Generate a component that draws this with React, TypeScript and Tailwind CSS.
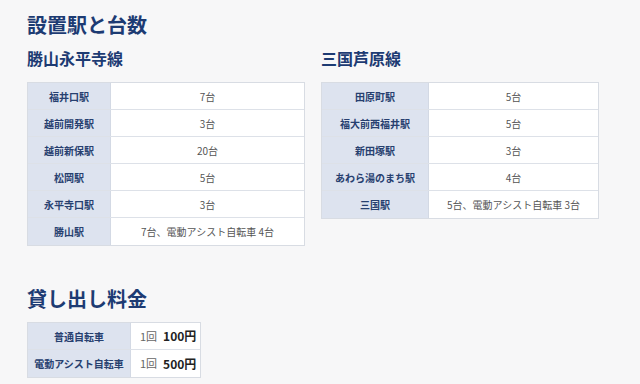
import type { ReactNode } from "react";

const font = { fontFamily: '"Noto Sans CJK JP", "Noto Sans", sans-serif' };

const katsuyama: [string, string][] = [
  ["福井口駅", "7台"],
  ["越前開発駅", "3台"],
  ["越前新保駅", "20台"],
  ["松岡駅", "5台"],
  ["永平寺口駅", "3台"],
  ["勝山駅", "7台、電動アシスト自転車 4台"],
];

const mikuni: [string, string][] = [
  ["田原町駅", "5台"],
  ["福大前西福井駅", "5台"],
  ["新田塚駅", "3台"],
  ["あわら湯のまち駅", "4台"],
  ["三国駅", "5台、電動アシスト自転車 3台"],
];

function Row({ label, children, headW }: { label: string; children: ReactNode; headW: string }) {
  return (
    <div className="flex h-[27px] border-b border-[#dde1e8] last:border-b-0">
      <div
        className={`${headW} shrink-0 flex items-center justify-center bg-[#dde3ef] border-r border-[#d3d9e4] text-[10px] font-bold text-[#27406f]`}
      >
        {label}
      </div>
      {children}
    </div>
  );
}

function StationTable({ title, rows, headW }: { title: string; rows: [string, string][]; headW: string }) {
  return (
    <div>
      <h3 className="text-[16px] font-bold text-[#1d3b73] leading-[24px] mb-[12px]">{title}</h3>
      <div className="bg-white border border-[#d8dce3]">
        {rows.map(([s, n]) => (
          <Row key={s} label={s} headW={headW}>
            <div className="flex-1 flex items-center justify-center text-[10px] text-[#555]">{n}</div>
          </Row>
        ))}
      </div>
    </div>
  );
}

export default function App() {
  return (
    <div className="w-[640px] h-[384px] overflow-hidden bg-[#f7f7f8] pl-[27px]" style={font}>
      <h2 className="pt-[10px] text-[20px] font-bold text-[#1d3b73] leading-[30px]">設置駅と台数</h2>
      <div className="mt-[6px] grid grid-cols-[278px_278px] gap-x-[16px] items-start">
        <StationTable title="勝山永平寺線" rows={katsuyama} headW="w-[83px]" />
        <StationTable title="三国芦原線" rows={mikuni} headW="w-[107px]" />
      </div>

      <h2 className="mt-[38px] text-[20px] font-bold text-[#1d3b73] leading-[30px]">貸し出し料金</h2>
      <div className="mt-[8px] w-[174px] bg-white border border-[#d8dce3]">
        {[
          ["普通自転車", "100円"],
          ["電動アシスト自転車", "500円"],
        ].map(([k, p]) => (
          <Row key={k} label={k} headW="w-[103px]">
            <div className="flex-1 flex items-center pl-[9px] gap-[6px]">
              <span className="text-[11px] text-[#666]">1回</span>
              <span className="text-[12px] font-bold text-[#222]">{p}</span>
            </div>
          </Row>
        ))}
      </div>
    </div>
  );
}
